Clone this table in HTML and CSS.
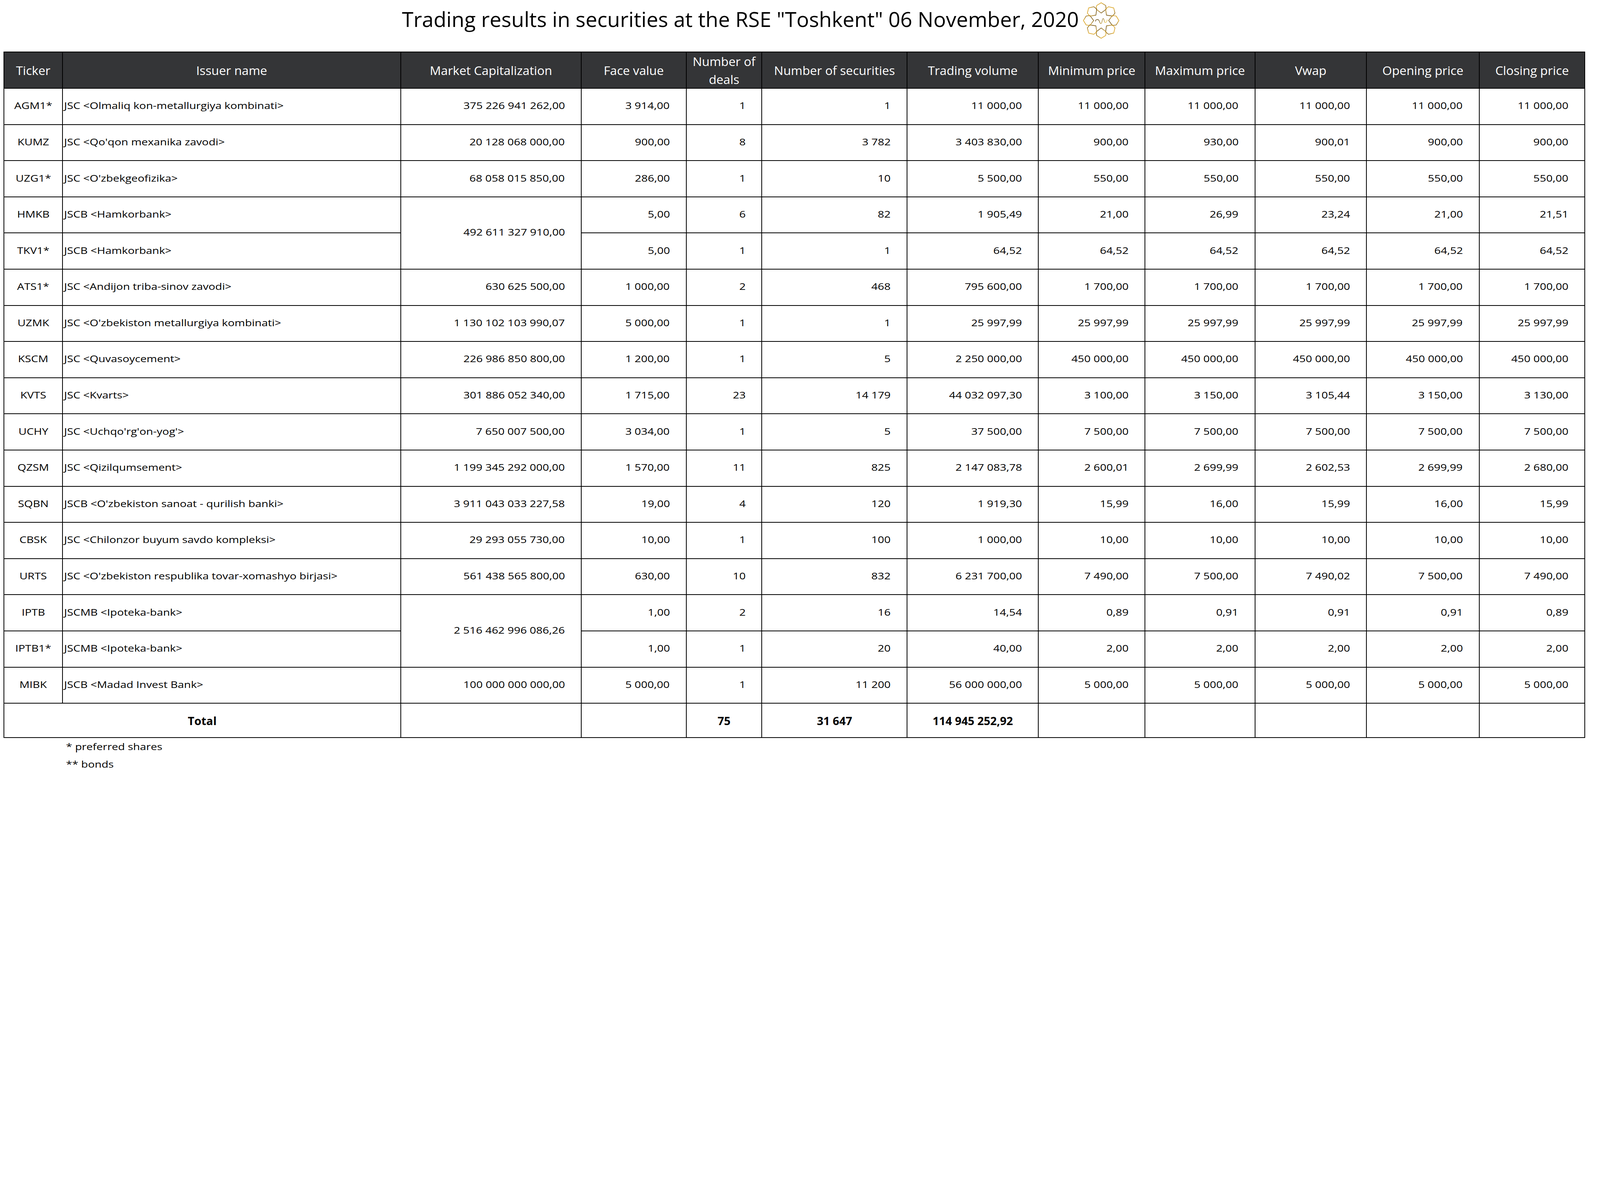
FILE: index.html
```html
<!DOCTYPE html>
<html lang="en">
<head>
<meta charset="utf-8">
<title>Trading results</title>
<link rel="stylesheet" href="styles.css">
</head>
<body>
<header class="title-row">
  <h1 class="title">Trading results in securities at the RSE "Toshkent" 06 November, 2020</h1>
  <svg class="logo" viewBox="-75 -74 150 148" width="96" height="95" aria-hidden="true">
    <defs>
      <linearGradient id="gold" gradientUnits="userSpaceOnUse" x1="-70" y1="-70" x2="70" y2="70">
        <stop offset="0" stop-color="#9a6a14"/>
        <stop offset="0.25" stop-color="#e0ab2c"/>
        <stop offset="0.45" stop-color="#5e4618"/>
        <stop offset="0.6" stop-color="#f2c844"/>
        <stop offset="0.8" stop-color="#c08a1c"/>
        <stop offset="1" stop-color="#f0c23a"/>
      </linearGradient>
      <polygon id="petal" points="0,-71 -18,-60 -20,-45 0,-30 20,-45 18,-60"/>
    </defs>
    <g fill="none" stroke="url(#gold)" stroke-width="2.6" stroke-linejoin="round">
      <use href="#petal"/>
      <use href="#petal" transform="rotate(45)"/>
      <use href="#petal" transform="rotate(90)"/>
      <use href="#petal" transform="rotate(135)"/>
      <use href="#petal" transform="rotate(180)"/>
      <use href="#petal" transform="rotate(225)"/>
      <use href="#petal" transform="rotate(270)"/>
      <use href="#petal" transform="rotate(315)"/>
      <path d="M-22,3 C-24,-3 -16,-6 -11,-3 C-6,0 -7,12 -1,12 C5,12 3,-8 8,-8 C13,-8 11,8 16,8 C21,8 24,3 24,-3" stroke-width="2.2" stroke-linecap="round"/>
    </g>
  </svg>
</header>

<table class="results">
  <colgroup>
    <col class="c-ticker"><col class="c-issuer"><col class="c-cap"><col class="c-face"><col class="c-deals"><col class="c-secs"><col class="c-vol"><col class="c-min"><col class="c-max"><col class="c-vwap"><col class="c-open"><col class="c-close">
  </colgroup>
  <thead>
    <tr>
      <th>Ticker</th><th>Issuer name</th><th>Market Capitalization</th><th>Face value</th><th>Number of deals</th><th>Number of securities</th><th>Trading volume</th><th>Minimum price</th><th>Maximum price</th><th>Vwap</th><th>Opening price</th><th>Closing price</th>
    </tr>
  </thead>
  <tbody>
    <tr><td class="tk"><span>AGM1*</span></td><td class="nm"><span>JSC &lt;Olmaliq kon-metallurgiya kombinati&gt;</span></td><td class="n"><span>375 226 941 262,00</span></td><td class="n"><span>3 914,00</span></td><td class="n"><span>1</span></td><td class="n"><span>1</span></td><td class="n"><span>11 000,00</span></td><td class="n"><span>11 000,00</span></td><td class="n"><span>11 000,00</span></td><td class="n"><span>11 000,00</span></td><td class="n"><span>11 000,00</span></td><td class="n"><span>11 000,00</span></td></tr>
    <tr><td class="tk"><span>KUMZ</span></td><td class="nm"><span>JSC &lt;Qo'qon mexanika zavodi&gt;</span></td><td class="n"><span>20 128 068 000,00</span></td><td class="n"><span>900,00</span></td><td class="n"><span>8</span></td><td class="n"><span>3 782</span></td><td class="n"><span>3 403 830,00</span></td><td class="n"><span>900,00</span></td><td class="n"><span>930,00</span></td><td class="n"><span>900,01</span></td><td class="n"><span>900,00</span></td><td class="n"><span>900,00</span></td></tr>
    <tr><td class="tk"><span>UZG1*</span></td><td class="nm"><span>JSC &lt;O'zbekgeofizika&gt;</span></td><td class="n"><span>68 058 015 850,00</span></td><td class="n"><span>286,00</span></td><td class="n"><span>1</span></td><td class="n"><span>10</span></td><td class="n"><span>5 500,00</span></td><td class="n"><span>550,00</span></td><td class="n"><span>550,00</span></td><td class="n"><span>550,00</span></td><td class="n"><span>550,00</span></td><td class="n"><span>550,00</span></td></tr>
    <tr><td class="tk"><span>HMKB</span></td><td class="nm"><span>JSCB &lt;Hamkorbank&gt;</span></td><td class="n" rowspan="2"><span>492 611 327 910,00</span></td><td class="n"><span>5,00</span></td><td class="n"><span>6</span></td><td class="n"><span>82</span></td><td class="n"><span>1 905,49</span></td><td class="n"><span>21,00</span></td><td class="n"><span>26,99</span></td><td class="n"><span>23,24</span></td><td class="n"><span>21,00</span></td><td class="n"><span>21,51</span></td></tr>
    <tr><td class="tk"><span>TKV1*</span></td><td class="nm"><span>JSCB &lt;Hamkorbank&gt;</span></td><td class="n"><span>5,00</span></td><td class="n"><span>1</span></td><td class="n"><span>1</span></td><td class="n"><span>64,52</span></td><td class="n"><span>64,52</span></td><td class="n"><span>64,52</span></td><td class="n"><span>64,52</span></td><td class="n"><span>64,52</span></td><td class="n"><span>64,52</span></td></tr>
    <tr><td class="tk"><span>ATS1*</span></td><td class="nm"><span>JSC &lt;Andijon triba-sinov zavodi&gt;</span></td><td class="n"><span>630 625 500,00</span></td><td class="n"><span>1 000,00</span></td><td class="n"><span>2</span></td><td class="n"><span>468</span></td><td class="n"><span>795 600,00</span></td><td class="n"><span>1 700,00</span></td><td class="n"><span>1 700,00</span></td><td class="n"><span>1 700,00</span></td><td class="n"><span>1 700,00</span></td><td class="n"><span>1 700,00</span></td></tr>
    <tr><td class="tk"><span>UZMK</span></td><td class="nm"><span>JSC &lt;O'zbekiston metallurgiya kombinati&gt;</span></td><td class="n"><span>1 130 102 103 990,07</span></td><td class="n"><span>5 000,00</span></td><td class="n"><span>1</span></td><td class="n"><span>1</span></td><td class="n"><span>25 997,99</span></td><td class="n"><span>25 997,99</span></td><td class="n"><span>25 997,99</span></td><td class="n"><span>25 997,99</span></td><td class="n"><span>25 997,99</span></td><td class="n"><span>25 997,99</span></td></tr>
    <tr><td class="tk"><span>KSCM</span></td><td class="nm"><span>JSC &lt;Quvasoycement&gt;</span></td><td class="n"><span>226 986 850 800,00</span></td><td class="n"><span>1 200,00</span></td><td class="n"><span>1</span></td><td class="n"><span>5</span></td><td class="n"><span>2 250 000,00</span></td><td class="n"><span>450 000,00</span></td><td class="n"><span>450 000,00</span></td><td class="n"><span>450 000,00</span></td><td class="n"><span>450 000,00</span></td><td class="n"><span>450 000,00</span></td></tr>
    <tr><td class="tk"><span>KVTS</span></td><td class="nm"><span>JSC &lt;Kvarts&gt;</span></td><td class="n"><span>301 886 052 340,00</span></td><td class="n"><span>1 715,00</span></td><td class="n"><span>23</span></td><td class="n"><span>14 179</span></td><td class="n"><span>44 032 097,30</span></td><td class="n"><span>3 100,00</span></td><td class="n"><span>3 150,00</span></td><td class="n"><span>3 105,44</span></td><td class="n"><span>3 150,00</span></td><td class="n"><span>3 130,00</span></td></tr>
    <tr><td class="tk"><span>UCHY</span></td><td class="nm"><span>JSC &lt;Uchqo'rg'on-yog'&gt;</span></td><td class="n"><span>7 650 007 500,00</span></td><td class="n"><span>3 034,00</span></td><td class="n"><span>1</span></td><td class="n"><span>5</span></td><td class="n"><span>37 500,00</span></td><td class="n"><span>7 500,00</span></td><td class="n"><span>7 500,00</span></td><td class="n"><span>7 500,00</span></td><td class="n"><span>7 500,00</span></td><td class="n"><span>7 500,00</span></td></tr>
    <tr><td class="tk"><span>QZSM</span></td><td class="nm"><span>JSC &lt;Qizilqumsement&gt;</span></td><td class="n"><span>1 199 345 292 000,00</span></td><td class="n"><span>1 570,00</span></td><td class="n"><span>11</span></td><td class="n"><span>825</span></td><td class="n"><span>2 147 083,78</span></td><td class="n"><span>2 600,01</span></td><td class="n"><span>2 699,99</span></td><td class="n"><span>2 602,53</span></td><td class="n"><span>2 699,99</span></td><td class="n"><span>2 680,00</span></td></tr>
    <tr><td class="tk"><span>SQBN</span></td><td class="nm"><span>JSCB &lt;O'zbekiston sanoat - qurilish banki&gt;</span></td><td class="n"><span>3 911 043 033 227,58</span></td><td class="n"><span>19,00</span></td><td class="n"><span>4</span></td><td class="n"><span>120</span></td><td class="n"><span>1 919,30</span></td><td class="n"><span>15,99</span></td><td class="n"><span>16,00</span></td><td class="n"><span>15,99</span></td><td class="n"><span>16,00</span></td><td class="n"><span>15,99</span></td></tr>
    <tr><td class="tk"><span>CBSK</span></td><td class="nm"><span>JSC &lt;Chilonzor buyum savdo kompleksi&gt;</span></td><td class="n"><span>29 293 055 730,00</span></td><td class="n"><span>10,00</span></td><td class="n"><span>1</span></td><td class="n"><span>100</span></td><td class="n"><span>1 000,00</span></td><td class="n"><span>10,00</span></td><td class="n"><span>10,00</span></td><td class="n"><span>10,00</span></td><td class="n"><span>10,00</span></td><td class="n"><span>10,00</span></td></tr>
    <tr><td class="tk"><span>URTS</span></td><td class="nm"><span>JSC &lt;O'zbekiston respublika tovar-xomashyo birjasi&gt;</span></td><td class="n"><span>561 438 565 800,00</span></td><td class="n"><span>630,00</span></td><td class="n"><span>10</span></td><td class="n"><span>832</span></td><td class="n"><span>6 231 700,00</span></td><td class="n"><span>7 490,00</span></td><td class="n"><span>7 500,00</span></td><td class="n"><span>7 490,02</span></td><td class="n"><span>7 500,00</span></td><td class="n"><span>7 490,00</span></td></tr>
    <tr><td class="tk"><span>IPTB</span></td><td class="nm"><span>JSCMB &lt;Ipoteka-bank&gt;</span></td><td class="n" rowspan="2"><span>2 516 462 996 086,26</span></td><td class="n"><span>1,00</span></td><td class="n"><span>2</span></td><td class="n"><span>16</span></td><td class="n"><span>14,54</span></td><td class="n"><span>0,89</span></td><td class="n"><span>0,91</span></td><td class="n"><span>0,91</span></td><td class="n"><span>0,91</span></td><td class="n"><span>0,89</span></td></tr>
    <tr><td class="tk"><span>IPTB1*</span></td><td class="nm"><span>JSCMB &lt;Ipoteka-bank&gt;</span></td><td class="n"><span>1,00</span></td><td class="n"><span>1</span></td><td class="n"><span>20</span></td><td class="n"><span>40,00</span></td><td class="n"><span>2,00</span></td><td class="n"><span>2,00</span></td><td class="n"><span>2,00</span></td><td class="n"><span>2,00</span></td><td class="n"><span>2,00</span></td></tr>
    <tr><td class="tk"><span>MIBK</span></td><td class="nm"><span>JSCB &lt;Madad Invest Bank&gt;</span></td><td class="n"><span>100 000 000 000,00</span></td><td class="n"><span>5 000,00</span></td><td class="n"><span>1</span></td><td class="n"><span>11 200</span></td><td class="n"><span>56 000 000,00</span></td><td class="n"><span>5 000,00</span></td><td class="n"><span>5 000,00</span></td><td class="n"><span>5 000,00</span></td><td class="n"><span>5 000,00</span></td><td class="n"><span>5 000,00</span></td></tr>
  </tbody>
  <tfoot>
    <tr><td class="tot" colspan="2">Total</td><td></td><td></td><td class="tot">75</td><td class="tot">31 647</td><td class="tot">114 945 252,92</td><td></td><td></td><td></td><td></td><td></td></tr>
  </tfoot>
</table>

<div class="notes">
  <p class="note"><span>* preferred shares</span></p>
  <p class="note"><span>** bonds</span></p>
</div>
</body>
</html>
```
FILE: styles.css
```css
html, body {
  margin: 0;
  padding: 0;
  background: #ffffff;
  color: #000000;
  font-family: "Open Sans", "Noto Sans", sans-serif;
}

.title-row {
  display: flex;
  align-items: flex-start;
  height: 132.3px;
  padding-left: 1029px;
  box-sizing: border-box;
}

.title {
  margin: 13.2px 0 0 0;
  font-size: 53.4px;
  font-weight: 400;
  line-height: 72.8px;
  white-space: nowrap;
}

.logo {
  display: block;
  margin: 4.6px 0 0 9.3px;
  flex: none;
}

.results {
  border-collapse: collapse;
  table-layout: fixed;
  width: 4047.8px;
  margin-left: 8.6px;
}

.c-ticker { width: 150.8px; }
.c-issuer { width: 865.3px; }
.c-cap { width: 462.4px; }
.c-face { width: 268.6px; }
.c-deals { width: 193.8px; }
.c-secs { width: 371.8px; }
.c-vol { width: 336px; }
.c-min { width: 273.2px; }
.c-max { width: 281.1px; }
.c-vwap { width: 285.8px; }
.c-open { width: 288.4px; }
.c-close { width: 270.6px; }

.results th,
.results td {
  border: 2px solid #000000;
  padding: 0;
  vertical-align: middle;
  white-space: nowrap;
}

.results thead tr { height: 92.6px; }
.results tbody tr { height: 92.6px; }
.results tfoot tr { height: 88px; }

.results th {
  background: #343537;
  color: #ffffff;
  font-size: 31.7px;
  font-weight: 400;
  line-height: 45.4px;
  text-align: center;
  white-space: normal;
}

.results td {
  font-size: 24.4px;
  line-height: 33px;
  padding-bottom: 5.2px;
}

.results td span {
  display: inline-block;
  transform: scaleX(1.18);
}

.results td.tk {
  text-align: center;
}
.results td.tk span { transform-origin: center center; }

.results td.nm {
  text-align: left;
  padding-left: 2.6px;
}
.results td.nm span { transform-origin: left center; }

.results td.n {
  text-align: right;
  padding-right: 41px;
}
.results td.n span { transform-origin: right center; }

.results td.tot {
  text-align: center;
  font-size: 29px;
  font-weight: 700;
  padding-bottom: 0;
}

.notes {
  padding-left: 168.7px;
}

.note {
  margin: 0;
  font-size: 23.8px;
  line-height: 44.3px;
}

.note span {
  display: inline-block;
  transform: scaleX(1.2);
  transform-origin: left center;
}
```
